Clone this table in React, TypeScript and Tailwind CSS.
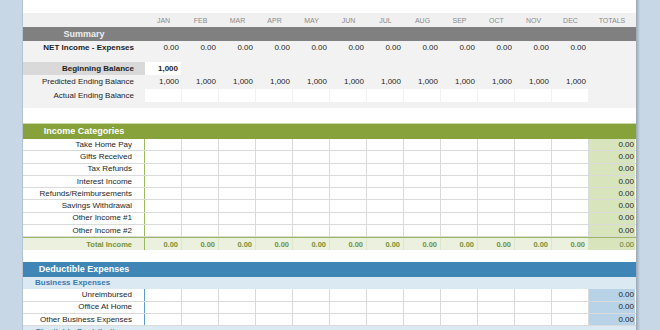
import React from "react";

const months = ["JAN", "FEB", "MAR", "APR", "MAY", "JUN", "JUL", "AUG", "SEP", "OCT", "NOV", "DEC"];
const grid = "grid grid-cols-[122px_repeat(12,37px)_46px]";

const incomeRows = [
  "Take Home Pay",
  "Gifts Received",
  "Tax Refunds",
  "Interest Income",
  "Refunds/Reimbursements",
  "Savings Withdrawal",
  "Other Income #1",
  "Other Income #2",
];

const expenseRows = ["Unreimbursed", "Office At Home", "Other Business Expenses"];

function DataRow({ label, line, totalBg }: { label: string; line: string; totalBg: string }) {
  return (
    <div className={`${grid} h-[12.3px] border-b border-[#dadada] bg-white`}>
      <div className={`flex items-center justify-end pr-[12px] border-r ${line} text-[#1e1e1e]`}>{label}</div>
      {months.map((m) => (
        <div key={m} className="border-r border-[#dadada]" />
      ))}
      <div className={`flex items-center justify-end pr-[1px] ${totalBg} text-[#1e1e1e]`}>0.00</div>
    </div>
  );
}

export default function App() {
  return (
    <div
      className="flex w-[660px] h-[330px] overflow-hidden bg-[#c7d7e6] text-[8px] leading-none"
      style={{ fontFamily: '"Liberation Sans", Arial, sans-serif' }}
    >
      <div className="w-[23px] shrink-0 bg-[#c7d7e6] border-r border-[#b3c3d3]" />
      <div className="w-[613px] shrink-0 bg-white">
        <div className="h-[13px]" />
        {/* header */}
        <div className={`${grid} h-[14px] bg-[#f0f0f0] text-[7px] text-[#8a8a8a]`}>
          <div />
          {months.map((m) => (
            <div key={m} className="flex items-center justify-center">{m}</div>
          ))}
          <div className="flex items-center justify-center">TOTALS</div>
        </div>
        {/* summary bar */}
        <div className={`${grid} h-[14px] bg-[#808080]`}>
          <div className="flex items-center justify-center text-[9px] font-bold text-[#eeeeee]">Summary</div>
        </div>
        {/* summary section */}
        <div className="bg-[#f2f2f2] pb-[6px]">
          <div className={`${grid} h-[14px] text-[#1e1e1e]`}>
            <div className="flex items-center justify-end pr-[11px] font-bold">NET Income - Expenses</div>
            {months.map((m) => (
              <div key={m} className="flex items-center justify-end pr-[3px]">0.00</div>
            ))}
            <div />
          </div>
          <div className="h-[7px]" />
          <div className={`${grid} h-[13px] text-[#1e1e1e]`}>
            <div className="flex items-center justify-end pr-[11px] font-bold bg-[#d9d9d9]">Beginning Balance</div>
            <div className="flex items-center justify-end pr-[3px] font-bold bg-white mr-[1px]">1,000</div>
          </div>
          <div className={`${grid} h-[14px] text-[#1e1e1e]`}>
            <div className="flex items-center justify-end pr-[11px]">Predicted Ending Balance</div>
            {months.map((m) => (
              <div key={m} className="flex items-center justify-end pr-[3px]">1,000</div>
            ))}
            <div />
          </div>
          <div className={`${grid} h-[13px] text-[#1e1e1e]`}>
            <div className="flex items-center justify-end pr-[11px]">Actual Ending Balance</div>
            {months.map((m) => (
              <div key={m} className="bg-white mr-[1px]" />
            ))}
            <div />
          </div>
        </div>
        <div className="h-[15px]" />
        {/* income */}
        <div className={`${grid} h-[16px] bg-[#87a13b] border-t border-[#c9d8a6]`}>
          <div className="flex items-center justify-center text-[9px] font-bold text-white">Income Categories</div>
        </div>
        {incomeRows.map((r) => (
          <DataRow key={r} label={r} line="border-[#9cb85c]" totalBg="bg-[#d8e4bc]" />
        ))}
        <div className={`${grid} h-[13px] bg-[#ebf1de] border-t border-[#9cb85c] text-[7.5px] font-bold text-[#76923c]`}>
          <div className="flex items-center justify-end pr-[12px] border-r border-[#9cb85c]">Total Income</div>
          {months.map((m) => (
            <div key={m} className="flex items-center justify-end pr-[3px] border-r border-[#dde6c9]">0.00</div>
          ))}
          <div className="flex items-center justify-end pr-[1px] bg-[#d8e4bc] font-normal text-[#5f7a2e]">0.00</div>
        </div>
        <div className="h-[12px]" />
        {/* expenses */}
        <div className={`${grid} h-[15px] bg-[#3f85b6]`}>
          <div className="flex items-center justify-center text-[9px] font-bold text-white">Deductible Expenses</div>
        </div>
        <div className="h-[12px] flex items-center pl-[12px] bg-[#dbe9f3] text-[#3a7ab0] font-bold">Business Expenses</div>
        {expenseRows.map((r) => (
          <DataRow key={r} label={r} line="border-[#5b9bd0]" totalBg="bg-[#b8d2e7]" />
        ))}
        <div className="h-[12px] flex items-center pl-[12px] bg-[#dbe9f3] text-[#3a7ab0] font-bold">Charitable Contributions</div>
      </div>
      <div className="w-[4px] shrink-0 bg-gradient-to-r from-[#9aa6b2] to-[#c7d7e6]" />
      <div className="flex-1 bg-[#c7d7e6]" />
    </div>
  );
}
